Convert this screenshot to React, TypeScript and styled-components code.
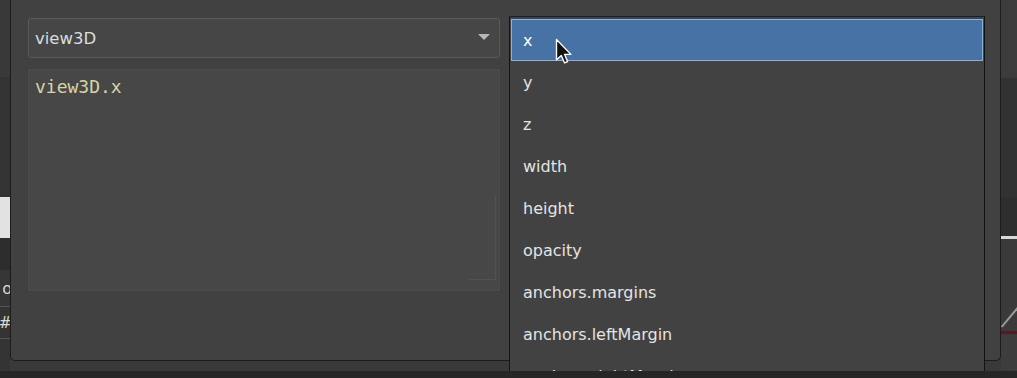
import React from "react";
import styled, { createGlobalStyle } from "styled-components";

const properties = [
  "x",
  "y",
  "z",
  "width",
  "height",
  "opacity",
  "anchors.margins",
  "anchors.leftMargin",
  "anchors.rightMargin",
];

const leftEdge = [
  { h: 77, bg: "#393939" },
  { h: 120, bg: "#333333" },
  { h: 41, bg: "#e2e2e2" },
  { h: 32, bg: "#2d2d2d" },
  { h: 37, bg: "#363636", text: "o", line: true },
  { h: 32, bg: "#333333", text: "#", line: true },
  { h: 32, bg: "#343434" },
];

const rightEdge = [
  { h: 78, bg: "#3c3c3c" },
  { h: 119, bg: "#323232" },
  { h: 39, bg: "#2e2e2e" },
  { h: 3, bg: "#d8d8d8" },
  { h: 64, bg: "#3a3a3a" },
  { h: 28, bg: "#3a3a3a", slash: true },
  { h: 3, bg: "#521c1e" },
  { h: 37, bg: "#3d3d3d" },
];

export default function App() {
  return (
    <>
      <GlobalStyle />
      <Page>
        <Stage>
          <Edge>
            {leftEdge.map((b, i) => (
              <EdgeBlock key={i} $h={b.h} $bg={b.bg} $line={!!b.line}>
                {b.text && <EdgeText>{b.text}</EdgeText>}
              </EdgeBlock>
            ))}
          </Edge>
          <DialogColumn>
            <Dialog>
              <Column>
                <Combo>
                  <ComboLabel>view3D</ComboLabel>
                  <ComboArrow />
                </Combo>
                <Editor>
                  <Code>view3D.x</Code>
                  <Grip />
                </Editor>
              </Column>
              <Column>
                {/* property combo, covered by its open list */}
                <Combo>
                  <span />
                  <ComboArrow />
                </Combo>
                <Popup>
                  {properties.map((p, i) => (
                    <Item key={p} $selected={i === 0}>
                      {p}
                    </Item>
                  ))}
                </Popup>
              </Column>
            </Dialog>
          </DialogColumn>
          <Edge $right>
            {rightEdge.map((b, i) => (
              <EdgeBlock key={i} $h={b.h} $bg={b.bg} $line={false}>
                {b.slash && <Slash />}
              </EdgeBlock>
            ))}
          </Edge>
        </Stage>
        <BottomBar />
        <Cursor width="18" height="27" viewBox="0 0 12 18">
          <path
            d="M1 1 L1 14.5 L4.2 11.6 L6.4 16.6 L8.4 15.7 L6.3 10.9 L10.6 10.9 Z"
            fill="#111"
            stroke="#fff"
            strokeWidth="0.9"
            strokeLinejoin="round"
          />
        </Cursor>
      </Page>
    </>
  );
}

const GlobalStyle = createGlobalStyle`
  html, body {
    margin: 0;
    padding: 0;
    background: #2a2a2a;
  }
  body {
    font-family: "DejaVu Sans", "Liberation Sans", sans-serif;
  }
`;

const Page = styled.div`
  position: relative;
  width: 1017px;
  height: 378px;
  overflow: hidden;
  display: flex;
  flex-direction: column;
  background: #2a2a2a;
`;

const Stage = styled.div`
  display: flex;
  height: 371px;
  background: #393939;
`;

const Edge = styled.div<{ $right?: boolean }>`
  display: flex;
  flex-direction: column;
  width: ${({ $right }) => ($right ? "16px" : "10px")};
  flex-shrink: 0;
`;

const EdgeBlock = styled.div<{ $h: number; $bg: string; $line: boolean }>`
  position: relative;
  height: ${({ $h }) => $h}px;
  background: ${({ $bg }) => $bg};
  border-bottom: ${({ $line }) => ($line ? "1px solid #555" : "none")};
  box-sizing: border-box;
  display: flex;
  align-items: center;
  justify-content: flex-end;
  overflow: hidden;
`;

const EdgeText = styled.span`
  font-size: 16px;
  color: #d8d8d8;
  margin-right: -2px;
`;

const Slash = styled.div`
  width: 2px;
  height: 26px;
  background: #9a9a9a;
  transform: rotate(40deg);
  margin-right: 6px;
`;

const DialogColumn = styled.div`
  flex: 1;
  display: flex;
  padding-bottom: 10px;
`;

const Dialog = styled.div`
  flex: 1;
  display: grid;
  grid-template-columns: 472px 473px;
  column-gap: 10px;
  align-items: start;
  padding: 18px 17px 0 17px;
  background: #414141;
  border: 1px solid #1c1c1c;
  border-top: none;
  border-radius: 0 0 5px 5px;
`;

const Column = styled.div`
  position: relative;
  display: flex;
  flex-direction: column;
  gap: 11px;
`;

const Combo = styled.div`
  height: 40px;
  box-sizing: border-box;
  display: flex;
  align-items: center;
  justify-content: space-between;
  padding: 0 9px 0 6px;
  background: #464646;
  border: 1px solid #5a5a5a;
  border-radius: 3px;
`;

const ComboLabel = styled.span`
  font-size: 16.5px;
  color: #dcdcdc;
`;

const ComboArrow = styled.span`
  width: 0;
  height: 0;
  border-left: 6px solid transparent;
  border-right: 6px solid transparent;
  border-top: 6px solid #b8b8b8;
  margin-top: -2px;
`;

const Editor = styled.div`
  position: relative;
  height: 222px;
  box-sizing: border-box;
  padding: 5px 6px;
  background: #474747;
  border: 1px solid #4c4c4c;
`;

const Code = styled.div`
  font-family: "DejaVu Sans Mono", "Liberation Mono", monospace;
  font-size: 18px;
  line-height: 24px;
  color: #d9d3a6;
`;

const Grip = styled.div`
  position: absolute;
  right: 3px;
  bottom: 10px;
  width: 26px;
  height: 84px;
  border-right: 1px solid #525252;
  border-bottom: 1px solid #525252;
`;

const Popup = styled.div`
  position: absolute;
  top: -2px;
  left: -1px;
  right: -2px;
  height: 355px;
  overflow: hidden;
  padding: 2px 1px 0 1px;
  box-sizing: border-box;
  background: #424242;
  border: 1px solid #141414;
  border-top-color: #0e2238;
  border-bottom: none;
  z-index: 2;
`;

const Item = styled.div<{ $selected: boolean }>`
  height: 42px;
  box-sizing: border-box;
  display: flex;
  align-items: center;
  padding-left: 11px;
  font-size: 16px;
  color: ${({ $selected }) => ($selected ? "#ffffff" : "#e4e4e4")};
  background: ${({ $selected }) => ($selected ? "#4672a5" : "transparent")};
  border: 1px solid ${({ $selected }) => ($selected ? "#8fb0d6" : "transparent")};
`;

const BottomBar = styled.div`
  height: 7px;
  background: #262626;
  position: relative;
  z-index: 3;
`;

const Cursor = styled.svg`
  position: absolute;
  left: 555px;
  top: 38px;
  z-index: 5;
`;
